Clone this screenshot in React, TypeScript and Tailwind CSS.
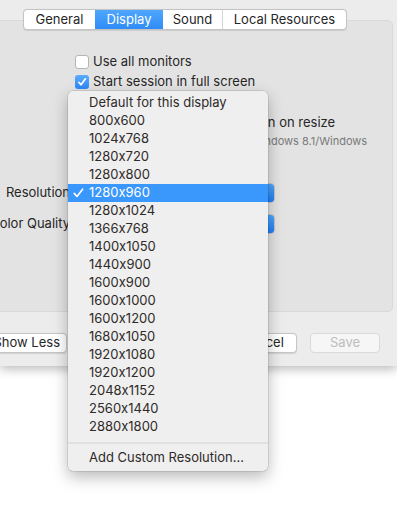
import React from 'react';

const resolutions = [
  'Default for this display',
  '800x600',
  '1024x768',
  '1280x720',
  '1280x800',
  '1280x960',
  '1280x1024',
  '1366x768',
  '1400x1050',
  '1440x900',
  '1600x900',
  '1600x1000',
  '1600x1200',
  '1680x1050',
  '1920x1080',
  '1920x1200',
  '2048x1152',
  '2560x1440',
  '2880x1800',
];

const Checkbox = ({ checked }: { checked?: boolean }) =>
  checked ? (
    <span className="w-[14px] h-[14px] rounded-[3px] bg-gradient-to-b from-[#5cacfd] to-[#2a87f7] flex items-center justify-center shrink-0">
      <svg width="10" height="10" viewBox="0 0 10 10">
        <path d="M1.8 5.3 L4 7.8 L8.4 1.8" fill="none" stroke="white" strokeWidth="1.7" strokeLinecap="round" strokeLinejoin="round" />
      </svg>
    </span>
  ) : (
    <span className="w-[14px] h-[14px] rounded-[3px] bg-white border border-[#b5b5b5] shrink-0" />
  );

const Popup = ({ value }: { value: string }) => (
  <div className="w-[200px] h-[20px] rounded-[4px] bg-white border border-[#c4c4c4] flex items-center justify-between overflow-hidden">
    <span className="pl-[8px] text-[13px] text-[#262626]">{value}</span>
    <span className="w-[17px] h-full bg-gradient-to-b from-[#4ea5fd] to-[#1f7df5] flex items-center justify-center">
      <svg width="7" height="12" viewBox="0 0 7 12">
        <path d="M1 4.5 L3.5 2 L6 4.5 M1 7.5 L3.5 10 L6 7.5" fill="none" stroke="white" strokeWidth="1.2" />
      </svg>
    </span>
  </div>
);

const App = () => {
  return (
    <div className="w-[397px] h-[506px] bg-white relative overflow-hidden font-['Inter',sans-serif] [font-feature-settings:'calt'_0] text-[#262626]">
      {/* window */}
      <div className="h-[366px] bg-[#ececec] pt-[9px] shadow-[0_3px_10px_rgba(0,0,0,0.28)]">
        <div className="pl-[23px] relative z-10">
          <div className="flex w-[324px] h-[21px] bg-white border border-[#c3c3c3] rounded-[4px] overflow-hidden text-[13px] shadow-[0_0.5px_1px_rgba(0,0,0,0.1)]">
            <div className="w-[71px] flex items-center justify-center">General</div>
            <div className="w-[68px] flex items-center justify-center text-white bg-gradient-to-b from-[#4fa6fd] to-[#2e8cf7]">Display</div>
            <div className="w-[60px] flex items-center justify-center border-r border-[#d6d6d6]">Sound</div>
            <div className="flex-1 flex items-center justify-center">Local Resources</div>
          </div>
        </div>

        <div className="-mt-[10px] -ml-[8px] w-[401px] h-[292px] bg-[#e3e3e3] border border-[#d9d9d9] rounded-[5px] pt-[34px]">
          <div className="grid grid-cols-[77px_1fr] gap-x-[5px] text-[13px]">
            <div />
            <div className="flex flex-col gap-[6px]">
              <div className="flex items-center gap-[4px] h-[14px]">
                <Checkbox />
                <span>Use all monitors</span>
              </div>
              <div className="flex items-center gap-[4px] h-[14px]">
                <Checkbox checked />
                <span>Start session in full screen</span>
              </div>
              <div className="flex items-center gap-[4px] h-[14px]">
                <Checkbox checked />
                <span>Optimize for Retina displays</span>
              </div>
              <div className="flex items-start gap-[4px]">
                <Checkbox checked />
                <div className="flex flex-col -mt-[1px]">
                  <span className="leading-[16px]">Update the session resolution on resize</span>
                  <span className="text-[11px] leading-[23px] text-[#7a7a7a] whitespace-nowrap">Only available for sessions on Windows 8.1/Windows</span>
                  <span className="text-[11px] leading-[12px] text-[#7a7a7a]">Server 2012 R2 or later</span>
                </div>
              </div>
            </div>

            <div className="mt-[18px] h-[20px] flex items-center justify-end whitespace-nowrap">Resolution</div>
            <div className="mt-[18px]">
              <Popup value="Default for this display" />
            </div>
            <div className="mt-[11px] h-[20px] flex items-center justify-end whitespace-nowrap">Color Quality</div>
            <div className="mt-[11px]">
              <Popup value="High (32 bit)" />
            </div>
          </div>
        </div>

        <div className="flex items-center mt-[21px] text-[13px]">
          <div className="-ml-[20px] w-[87px] h-[20px] bg-white border border-[#c6c6c6] rounded-[4px] flex items-center justify-end pr-[6px] whitespace-nowrap shadow-[0_0.5px_1px_rgba(0,0,0,0.12)]">
            Show Less
          </div>
          <div className="ml-[161px] w-[69px] h-[20px] bg-white border border-[#c6c6c6] rounded-[4px] flex items-center justify-center shadow-[0_0.5px_1px_rgba(0,0,0,0.12)]">
            Cancel
          </div>
          <div className="ml-[13px] w-[70px] h-[20px] bg-[#f6f6f6] border border-[#d9d9d9] rounded-[4px] flex items-center justify-center text-[#bdbdbd]">
            Save
          </div>
        </div>
      </div>

      {/* popup menu */}
      <div className="absolute left-[68px] top-[91px] w-[200px] bg-[#efefef] rounded-[5px] pt-[3px] pb-[4px] text-[13px] text-[#2e2a28] shadow-[0_0_0_0.5px_rgba(0,0,0,0.18),0_6px_16px_rgba(0,0,0,0.28)]">
        {resolutions.map((r) => {
          const selected = r === '1280x960';
          return (
            <div
              key={r}
              className={`h-[18px] flex items-center ${selected ? 'bg-[#3a97fb] text-white' : ''}`}
            >
              <span className="w-[21px] flex justify-center">
                {selected && (
                  <svg width="11" height="10" viewBox="0 0 11 10">
                    <path d="M1.2 5.4 L4 8.4 L9.6 1.2" fill="none" stroke="white" strokeWidth="1.6" strokeLinecap="round" strokeLinejoin="round" />
                  </svg>
                )}
              </span>
              <span>{r}</span>
            </div>
          );
        })}
        <div className="h-[13px] flex items-center">
          <div className="w-full h-[2px] bg-[#e0e0e0]" />
        </div>
        <div className="h-[18px] flex items-center pl-[21px]">Add Custom Resolution...</div>
      </div>
    </div>
  );
};

export default App;
